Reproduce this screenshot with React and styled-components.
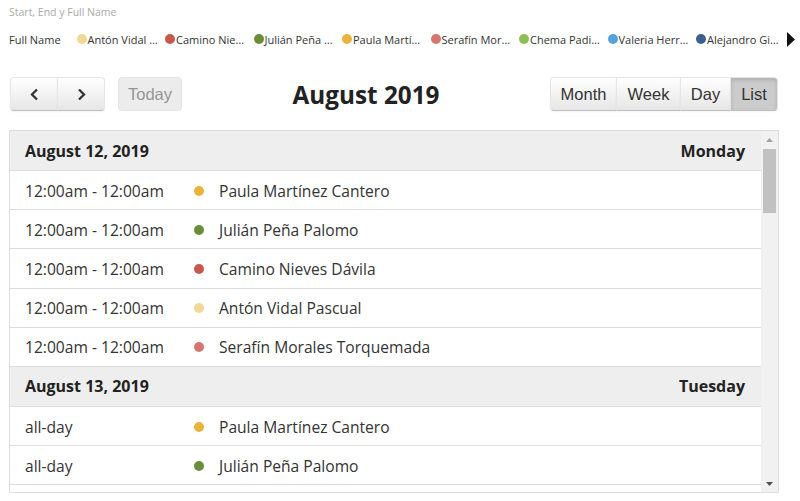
import React from 'react';
import styled, { createGlobalStyle } from 'styled-components';

const Global = createGlobalStyle`
  html, body { margin: 0; padding: 0; background: #fff; }
  body { font-family: "Open Sans", "Noto Sans", sans-serif; color: #333; overflow: hidden; }
  * { box-sizing: border-box; }
`;

const Page = styled.div`
  width: 800px;
  height: 501px;
  padding-left: 9px;
  overflow: hidden;
`;

const Caption = styled.div`
  font-size: 10.5px;
  line-height: 14px;
  height: 19px;
  padding-top: 5px;
  color: #a9a9a9;
`;

const Legend = styled.div`
  display: flex;
  align-items: center;
  height: 40px;
  white-space: nowrap;
`;

const LegendTitle = styled.div`
  width: 67.5px;
  font-size: 11px;
  color: #333;
  flex: none;
`;

const LegendItem = styled.div`
  width: 88.5px;
  flex: none;
  display: flex;
  align-items: center;
  font-size: 11px;
  color: #333;
  overflow: hidden;
`;

const Dot = styled.span`
  flex: none;
  width: ${p => p.$size}px;
  height: ${p => p.$size}px;
  border-radius: 50%;
  background: ${p => p.$color};
`;

const LegendText = styled.span`
  margin-left: 1px;
`;

const MoreArrow = styled.svg`
  flex: none;
  margin-left: 2.5px;
  width: 8px;
  height: 15px;
`;

const Toolbar = styled.div`
  display: flex;
  align-items: center;
  justify-content: space-between;
  margin-top: 18px;
  padding-left: 1px;
  width: 769px;
  height: 34px;
`;

const Side = styled.div`
  display: flex;
  align-items: center;
`;

const Group = styled.div`
  display: flex;
`;

const Button = styled.button`
  height: 34px;
  margin: 0;
  padding: 0;
  font-family: "Liberation Sans", Arial, sans-serif;
  font-size: 16.5px;
  color: #333;
  border: 1px solid;
  border-color: #e6e6e6 #e6e6e6 #bfbfbf;
  background: ${p => (p.$active ? '#cccccc' : 'linear-gradient(to bottom, #ffffff, #e6e6e6)')};
  box-shadow: ${p =>
    p.$active
      ? 'inset 0 2px 4px rgba(0,0,0,.15), 0 1px 2px rgba(0,0,0,.05)'
      : 'inset 0 1px 0 rgba(255,255,255,.2), 0 1px 2px rgba(0,0,0,.05)'};
  border-radius: ${p => (p.$first ? '4px 0 0 4px' : p.$last ? '0 4px 4px 0' : '0')};
  margin-left: ${p => (p.$first ? '0' : '-1px')};
  width: ${p => p.$w}px;
  display: flex;
  align-items: center;
  justify-content: center;
`;

const TodayButton = styled.button`
  height: 34px;
  width: 64px;
  margin-left: 13px;
  padding: 0;
  font-family: "Liberation Sans", Arial, sans-serif;
  font-size: 16.5px;
  color: #949494;
  background: #ececec;
  border: 1px solid #e4e4e4;
  border-radius: 4px;
`;

const Title = styled.h2`
  margin: 0;
  font-size: 24.3px;
  font-weight: 700;
  color: #222;
  font-family: "Open Sans", sans-serif;
`;

const Panel = styled.div`
  margin-top: 19px;
  width: 770px;
  height: 363px;
  border: 1px solid #ddd;
  display: flex;
`;

const ListBody = styled.div`
  flex: 1;
  overflow: hidden;
  display: flex;
  flex-direction: column;
`;

const DayHeader = styled.div`
  flex: none;
  height: 40px;
  background: #eeeeee;
  border-bottom: 1px solid #dddddd;
  display: flex;
  align-items: center;
  justify-content: space-between;
  padding: 0 16px 0 15px;
  font-size: 16px;
  font-weight: 700;
  color: #222;
`;

const EventRow = styled.div`
  flex: none;
  height: 39.2px;
  border-bottom: 1px solid #dddddd;
  display: flex;
  align-items: center;
  padding-left: 15px;
  padding-top: 1px;
  font-size: 15.6px;
  color: #333;
`;

const Time = styled.span`
  width: 169px;
  flex: none;
`;

const Name = styled.span`
  margin-left: 15px;
`;

const Scrollbar = styled.div`
  width: 17px;
  flex: none;
  background: #f1f1f1;
  display: flex;
  flex-direction: column;
  align-items: center;
`;

const ScrollBtn = styled.div`
  height: 17px;
  width: 17px;
  flex: none;
  display: flex;
  align-items: center;
  justify-content: center;
`;

const Thumb = styled.div`
  margin-top: 1px;
  width: 13px;
  height: 64px;
  background: #c1c1c1;
`;

const Spacer = styled.div`
  flex: 1;
`;

const people = [
  ['Antón Vidal …', '#f1d896'],
  ['Camino Nie…', '#c9584c'],
  ['Julián Peña …', '#6a8d3a'],
  ['Paula Martí…', '#e8b43c'],
  ['Serafín Mor…', '#d6766f'],
  ['Chema Padi…', '#8cc054'],
  ['Valeria Herr…', '#56a3dc'],
  ['Alejandro Gi…', '#3b608c'],
];

const days = [
  {
    date: 'August 12, 2019',
    day: 'Monday',
    events: [
      ['12:00am - 12:00am', 'Paula Martínez Cantero', '#e8b43c'],
      ['12:00am - 12:00am', 'Julián Peña Palomo', '#6a8d3a'],
      ['12:00am - 12:00am', 'Camino Nieves Dávila', '#c9584c'],
      ['12:00am - 12:00am', 'Antón Vidal Pascual', '#f1d896'],
      ['12:00am - 12:00am', 'Serafín Morales Torquemada', '#d6766f'],
    ],
  },
  {
    date: 'August 13, 2019',
    day: 'Tuesday',
    events: [
      ['all-day', 'Paula Martínez Cantero', '#e8b43c'],
      ['all-day', 'Julián Peña Palomo', '#6a8d3a'],
    ],
  },
];

const views = [
  ['Month', 67],
  ['Week', 65],
  ['Day', 51],
  ['List', 48],
];

const Chevron = ({ dir }) => (
  <svg width="9" height="13" viewBox="0 0 9 13">
    <polyline
      points={dir === 'left' ? '7,1.5 2,6.5 7,11.5' : '2,1.5 7,6.5 2,11.5'}
      fill="none"
      stroke="#333"
      strokeWidth="2.3"
    />
  </svg>
);

export default function App() {
  return (
    <Page>
      <Global />
      <Caption>Start, End y Full Name</Caption>
      <Legend>
        <LegendTitle>Full Name</LegendTitle>
        {people.map(([n, c]) => (
          <LegendItem key={n}>
            <Dot $size={10} $color={c} />
            <LegendText>{n}</LegendText>
          </LegendItem>
        ))}
        <MoreArrow viewBox="0 0 8 15">
          <polygon points="0,0 8,7.5 0,15" fill="#111" />
        </MoreArrow>
      </Legend>
      <Toolbar>
        <Side>
          <Group>
            <Button $first $w={48}><Chevron dir="left" /></Button>
            <Button $last $w={48}><Chevron dir="right" /></Button>
          </Group>
          <TodayButton>Today</TodayButton>
        </Side>
        <Title>August 2019</Title>
        <Group>
          {views.map(([v, w], i) => (
            <Button key={v} $w={w} $first={i === 0} $last={i === views.length - 1} $active={v === 'List'}>
              {v}
            </Button>
          ))}
        </Group>
      </Toolbar>
      <Panel>
        <ListBody>
          {days.map(d => (
            <React.Fragment key={d.date}>
              <DayHeader>
                <span>{d.date}</span>
                <span>{d.day}</span>
              </DayHeader>
              {d.events.map(([t, n, c], i) => (
                <EventRow key={i}>
                  <Time>{t}</Time>
                  <Dot $size={10} $color={c} />
                  <Name>{n}</Name>
                </EventRow>
              ))}
            </React.Fragment>
          ))}
        </ListBody>
        <Scrollbar>
          <ScrollBtn>
            <svg width="7" height="4" viewBox="0 0 7 4"><polygon points="0,4 3.5,0 7,4" fill="#a3a3a3" /></svg>
          </ScrollBtn>
          <Thumb />
          <Spacer />
          <ScrollBtn>
            <svg width="7" height="4" viewBox="0 0 7 4"><polygon points="0,0 3.5,4 7,0" fill="#505050" /></svg>
          </ScrollBtn>
        </Scrollbar>
      </Panel>
    </Page>
  );
}
